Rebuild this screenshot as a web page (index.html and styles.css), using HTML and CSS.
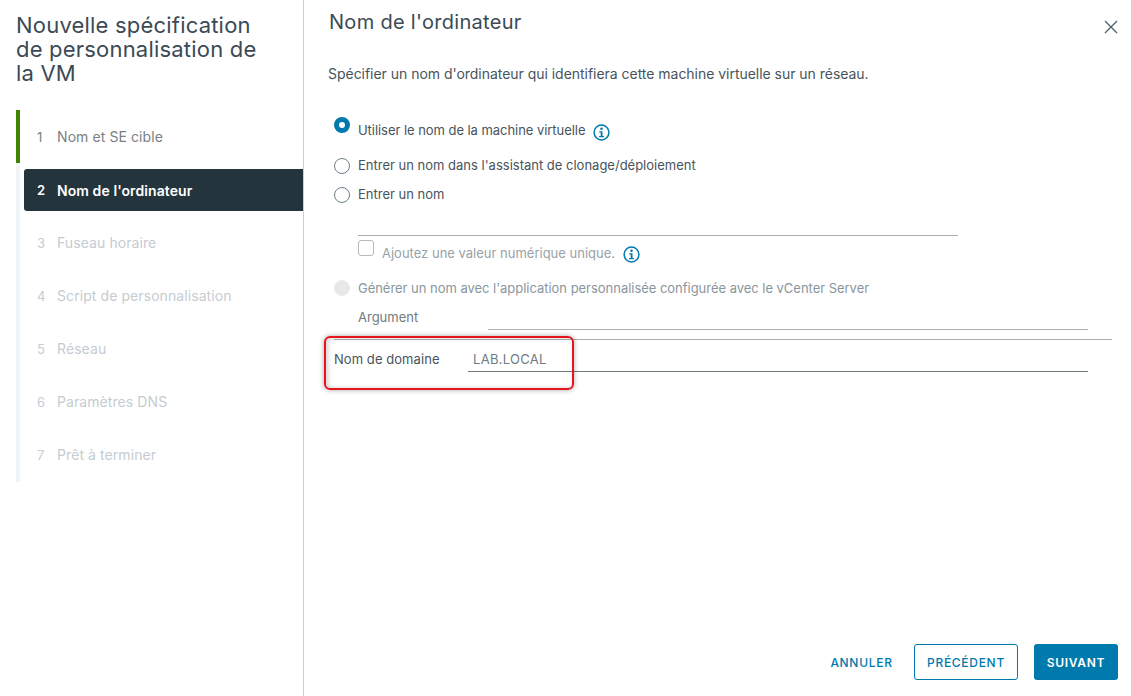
FILE: index.html
```html
<!DOCTYPE html>
<html lang="fr">
<head>
<meta charset="utf-8">
<title>Nouvelle spécification de personnalisation de la VM</title>
<link rel="stylesheet" href="styles.css">
</head>
<body>
<div class="wizard">
  <aside class="side">
    <h1 class="side-title">Nouvelle spécification de personnalisation de la VM</h1>
    <ol class="steps">
      <li class="step done"><span class="num">1</span><span>Nom et SE cible</span></li>
      <li class="step current"><span class="num">2</span><span>Nom de l'ordinateur</span></li>
      <li class="step"><span class="num">3</span><span>Fuseau horaire</span></li>
      <li class="step"><span class="num">4</span><span>Script de personnalisation</span></li>
      <li class="step"><span class="num">5</span><span>Réseau</span></li>
      <li class="step"><span class="num">6</span><span>Paramètres DNS</span></li>
      <li class="step"><span class="num">7</span><span>Prêt à terminer</span></li>
    </ol>
  </aside>
  <main class="main">
    <header class="head">
      <h2 class="title">Nom de l'ordinateur</h2>
      <svg class="close" width="14" height="14" viewBox="0 0 14 14"><path d="M1 1l12 12M13 1L1 13" stroke="#4b5f6b" stroke-width="1.3" fill="none"/></svg>
    </header>
    <p class="intro">Spécifier un nom d'ordinateur qui identifiera cette machine virtuelle sur un réseau.</p>
    <div class="form">
      <div class="radio-row first"><span class="radio checked"></span><span>Utiliser le nom de la machine virtuelle</span>
        <svg class="info" width="17" height="17" viewBox="0 0 17 17"><circle cx="8.5" cy="8.5" r="7.4" fill="none" stroke="#0079ad" stroke-width="1.5"/><circle cx="8.5" cy="4.8" r="1.3" fill="#0079ad"/><path d="M6.2 7.2h3.3v4.8h1.4v1.3H6.1V12h1.6V8.5H6.2z" fill="#0079ad"/></svg>
      </div>
      <div class="radio-row second"><span class="radio"></span><span>Entrer un nom dans l'assistant de clonage/déploiement</span></div>
      <div class="radio-row third"><span class="radio"></span><span>Entrer un nom</span></div>
      <div class="name-line"></div>
      <div class="check-row"><span class="check"></span><span class="check-label">Ajoutez une valeur numérique unique.</span>
        <svg class="info" width="17" height="17" viewBox="0 0 17 17"><circle cx="8.5" cy="8.5" r="7.4" fill="none" stroke="#0079ad" stroke-width="1.5"/><circle cx="8.5" cy="4.8" r="1.3" fill="#0079ad"/><path d="M6.2 7.2h3.3v4.8h1.4v1.3H6.1V12h1.6V8.5H6.2z" fill="#0079ad"/></svg>
      </div>
      <div class="radio-row disabled"><span class="radio off"></span><span>Générer un nom avec l'application personnalisée configurée avec le vCenter Server</span></div>
      <div class="arg-row"><span class="arg-label">Argument</span><span class="arg-line"></span></div>
      <div class="rule"></div>
      <div class="domain-row"><span class="domain-label">Nom de domaine</span><span class="domain-value">LAB.LOCAL</span><span class="callout"></span></div>
    </div>
    <footer class="foot">
      <button class="btn link">ANNULER</button>
      <button class="btn outline">PRÉCÉDENT</button>
      <button class="btn primary">SUIVANT</button>
    </footer>
  </main>
</div>
</body>
</html>
```
FILE: styles.css
```css
* { box-sizing: border-box; }
html, body { margin: 0; height: 100%; }
body { background: #fff; font-family: Inter, "Noto Sans", sans-serif; font-size: 13px; color: #48545c; overflow: hidden; }
.wizard { display: flex; height: 696px; }

.side { width: 304px; flex: none; border-right: 1px solid #c9d0d5; padding: 13px 0 0 16px; }
.side-title { margin: 0; font-weight: 400; font-size: 22px; line-height: 24px; color: #3b4a54; padding-right: 28px; letter-spacing: .2px; }
.steps { list-style: none; margin: 25px 0 0; padding: 0; border-left: 4px solid #eef4f8; height: 372px; display: flex; flex-direction: column; }
.step { height: 53px; display: flex; align-items: center; color: #c6ccd1; padding-left: 17px; font-size: 14px; letter-spacing: .08px; flex: none; }
.step .num { width: 20px; flex: none; font-size: 13px; }
.step.done { color: #7a7f83; margin-left: -4px; border-left: 4px solid #3f8400; padding-left: 17px; }
.step.current { background: #23343d; color: #fff; font-weight: 600; height: 42px; margin: 6px 0 5px 4px; padding-left: 13px; border-radius: 3px 0 0 3px; }

.main { flex: 1; display: flex; flex-direction: column; padding: 0 13px 16px 24px; min-width: 0; }
.head { display: flex; justify-content: space-between; align-items: center; height: 44px; }
.title { margin: 0; font-size: 20px; font-weight: 400; color: #3b4a54; padding-left: 1px; letter-spacing: .3px; }
.close { margin: 10px 0 0; }
.intro { margin: 21px 0 0; line-height: 18px; font-size: 14px; letter-spacing: -.03px; color: #48545c; }
.form { flex: 1; padding: 0 0 0 6px; }

.radio-row { display: flex; align-items: center; height: 18px; }
.radio-row.first { margin-top: 38px; letter-spacing: -.05px; }
.radio-row.second { margin-top: 17px; }
.radio-row.third { margin-top: 11px; }
.radio-row.disabled { margin-top: 15px; color: #8a969d; letter-spacing: -.03px; }
.radio { width: 16px; height: 16px; border-radius: 50%; border: 1px solid #6f7f89; margin-right: 8px; flex: none; background: #fff; transform: translateY(1px); }
.radio.checked { border: 5.5px solid #0079ad; background: #fff; transform: translateY(-5px); }
.radio.off { background: #e8e8e8; border-color: #e8e8e8; transform: none; }
.info { margin-left: 8px; flex: none; }
.first .info { transform: translateY(2px); }

.name-line { height: 1px; background: #a9b0b5; margin: 32px 0 0 24px; width: 600px; }
.check-row { display: flex; align-items: flex-start; margin: 4px 0 0 24px; height: 24px; }
.check { width: 16px; height: 16px; border: 1px solid #b3bbc0; border-radius: 3px; flex: none; }
.check-label { margin-left: 8px; line-height: 18px; color: #98a2a8; margin-top: 4px; }
.check-row .info { margin-top: 6px; }

.arg-row { display: flex; margin: 11px 0 0 24px; height: 31px; }
.arg-label { width: 130px; line-height: 18px; color: #6f7a81; flex: none; }
.arg-line { flex: 1; height: 1px; background: #a9b0b5; margin-top: 21px; margin-right: 30px; }
.rule { height: 1px; background: #a9b0b5; margin-right: 6px; }
.domain-row { position: relative; display: flex; height: 32px; }
.domain-label { width: 134px; line-height: 38px; flex: none; letter-spacing: .06px; }
.domain-value { flex: 1; border-bottom: 1px solid #6f7a81; line-height: 38px; padding-left: 5px; margin-right: 30px; color: #6f7a81; letter-spacing: .3px; }
.callout { position: absolute; left: -10px; top: -4px; width: 250px; height: 54px; border: 2px solid #e8141c; border-radius: 6px; box-shadow: 0 0 5px rgba(0,0,0,.35), inset 2px 0 5px rgba(0,0,0,.18); }

.foot { display: flex; justify-content: flex-end; align-items: center; gap: 16px; height: 36px; }
.btn { height: 36px; border-radius: 3px; font: 500 12px Inter, sans-serif; letter-spacing: .7px; padding: 0; background: none; }
.link { border: 0; color: #0079ad; width: 67px; margin-right: 3px; }
.outline { border: 1px solid #0079ad; color: #0079ad; width: 104px; }
.primary { border: 0; background: #0079ad; color: #fff; width: 84px; font-weight: 600; }
```
